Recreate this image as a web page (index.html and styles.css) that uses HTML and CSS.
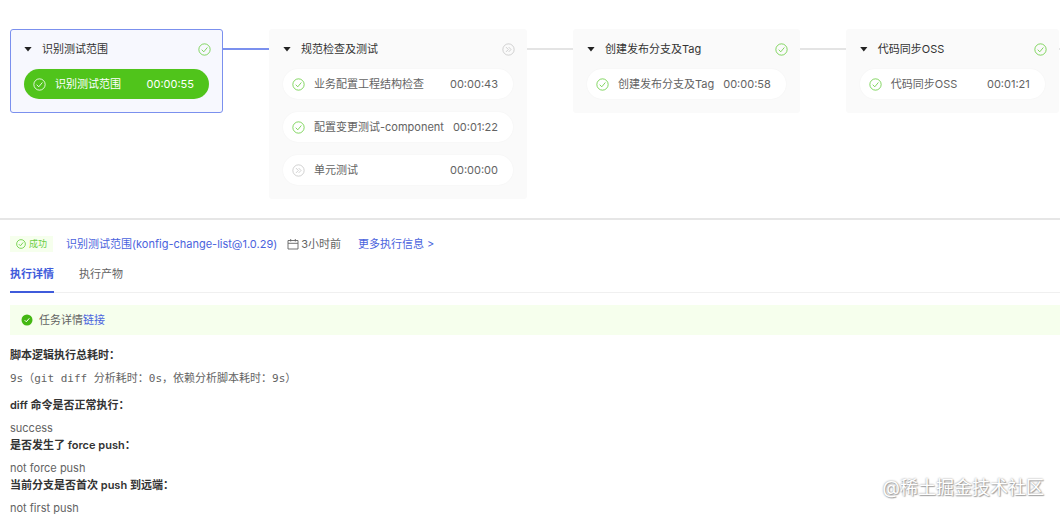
FILE: index.html
```html
<!DOCTYPE html>
<html lang="zh-CN">
<head>
<meta charset="UTF-8">
<meta name="viewport" content="width=device-width, initial-scale=1.0">
<title>识别测试范围</title>
<link rel="stylesheet" href="styles.css">
</head>
<body>

<!-- Shared icons -->
<svg class="sprite" aria-hidden="true">
    <symbol id="icon-check" viewBox="0 0 14 14">
        <circle cx="7" cy="7" r="6.1"/>
        <path d="M4 7.2l2.2 2.3 3.9-4.7"/>
    </symbol>
    <symbol id="icon-skip" viewBox="0 0 14 14">
        <circle cx="7" cy="7" r="6.1"/>
        <path d="M4.3 4.4L6.8 7 4.3 9.6M7.2 4.4L9.7 7 7.2 9.6"/>
    </symbol>
    <symbol id="icon-calendar" viewBox="0 0 12 12">
        <path d="M1 2.5h10v8.500H1zM1 5.300h10M3.700 1v2.500M8.300 1v2.500"/>
    </symbol>
</svg>

<div class="pipeline">
    <section class="stage stage-active">
        <div class="stage-header">
            <button class="stage-toggle"><span class="caret"></span>识别测试范围</button>
            <svg class="icon icon-success"><use href="#icon-check"/></svg>
        </div>
        <button class="job job-active">
            <svg class="icon"><use href="#icon-check"/></svg>
            <span class="job-name">识别测试范围</span>
            <span class="job-time">00:00:55</span>
        </button>
    </section>
    <span class="connector connector-active"></span>
    <section class="stage">
        <div class="stage-header">
            <button class="stage-toggle"><span class="caret"></span>规范检查及测试</button>
            <svg class="icon icon-skipped"><use href="#icon-skip"/></svg>
        </div>
        <button class="job">
            <svg class="icon icon-success"><use href="#icon-check"/></svg>
            <span class="job-name">业务配置工程结构检查</span>
            <span class="job-time">00:00:43</span>
        </button>
        <button class="job">
            <svg class="icon icon-success"><use href="#icon-check"/></svg>
            <span class="job-name">配置变更测试-component</span>
            <span class="job-time">00:01:22</span>
        </button>
        <button class="job">
            <svg class="icon icon-skipped"><use href="#icon-skip"/></svg>
            <span class="job-name">单元测试</span>
            <span class="job-time">00:00:00</span>
        </button>
    </section>
    <span class="connector"></span>
    <section class="stage">
        <div class="stage-header">
            <button class="stage-toggle"><span class="caret"></span>创建发布分支及Tag</button>
            <svg class="icon icon-success"><use href="#icon-check"/></svg>
        </div>
        <button class="job">
            <svg class="icon icon-success"><use href="#icon-check"/></svg>
            <span class="job-name">创建发布分支及Tag</span>
            <span class="job-time">00:00:58</span>
        </button>
    </section>
    <span class="connector"></span>
    <section class="stage">
        <div class="stage-header">
            <button class="stage-toggle"><span class="caret"></span>代码同步OSS</button>
            <svg class="icon icon-success"><use href="#icon-check"/></svg>
        </div>
        <button class="job">
            <svg class="icon icon-success"><use href="#icon-check"/></svg>
            <span class="job-name">代码同步OSS</span>
            <span class="job-time">00:01:21</span>
        </button>
    </section>
    <span class="connector"></span>
</div>

<main class="detail">
    <div class="summary">
        <span class="status"><svg class="icon icon-small"><use href="#icon-check"/></svg>成功</span>
        <a class="summary-name" href="#">识别测试范围(konfig-change-list@1.0.29)</a>
        <span class="summary-time"><svg class="icon icon-calendar"><use href="#icon-calendar"/></svg>3小时前</span>
        <a href="#">更多执行信息 &gt;</a>
    </div>

    <div class="tabs" role="tablist">
        <button class="tab tab-active" role="tab" aria-selected="true">执行详情</button>
        <button class="tab" role="tab" aria-selected="false">执行产物</button>
    </div>

    <div class="notice">
        <svg class="notice-icon" viewBox="0 0 12 12">
            <circle cx="6" cy="6" r="5.500"/>
            <path d="M3.700 6.200l1.600 1.600 3-3.500"/>
        </svg>
        <span>任务详情<a href="#">链接</a></span>
    </div>

    <div class="log">
        <h4>脚本逻辑执行总耗时：</h4>
        <pre>9s（git diff 分析耗时：0s，依赖分析脚本耗时：9s）</pre>
        <h4>diff 命令是否正常执行：</h4>
        <p>success</p>
        <h4>是否发生了 force push：</h4>
        <p>not force push</p>
        <h4>当前分支是否首次 push 到远端：</h4>
        <p>not first push</p>
    </div>
</main>

<div class="watermark">@稀土掘金技术社区</div>

</body>
</html>
```

FILE: styles.css
```css
* {
    box-sizing: border-box;
}
body {
    margin: 0;
    position: relative;
    min-height: 100vh;
    overflow-x: hidden;
    background-color: #fff;
    color: #636363;
    font-family: Inter, "Noto Sans CJK SC", sans-serif;
    font-size: 11px;
    line-height: 20px;
}
button {
    padding: 0;
    border: none;
    background: none;
    color: inherit;
    font: inherit;
    cursor: pointer;
}
a {
    color: #4a63dd;
    text-decoration: none;
}
.sprite {
    display: none;
}
.icon {
    flex: none;
    width: 13px;
    height: 13px;
    fill: none;
    stroke: currentColor;
    stroke-width: 0.9;
}
.icon-success {
    color: #6bce43;
}
.icon-skipped {
    color: #c8c8c8;
}
.icon-small {
    width: 10px;
    height: 10px;
    stroke-width: 1.2;
}
.icon-calendar {
    width: 12px;
    height: 12px;
}

/* Pipeline */
.pipeline {
    display: flex;
    align-items: flex-start;
    padding: 29px 0 19px 10px;
    overflow: hidden;
    border-bottom: 2px solid #e6e6e6;
}
.stage {
    flex: none;
    display: flex;
    flex-direction: column;
    min-width: 213px;
    padding: 9px 11px 13px 13px;
    border: 1px solid #fafafa;
    border-radius: 3px;
    background-color: #fafafa;
}
.stage-active {
    border-color: #7b90ee;
    background-color: #f7f8fe;
}
.stage-header {
    display: flex;
    justify-content: space-between;
    align-items: center;
    margin-bottom: 10px;
    color: #333;
}
.stage-toggle {
    display: flex;
    align-items: center;
    gap: 10px;
}
.caret {
    width: 8px;
    height: 5px;
    background-color: #222;
    clip-path: polygon(0 0, 100% 0, 50% 100%);
}
.job {
    display: flex;
    align-items: center;
    gap: 9px;
    height: 30px;
    padding: 0 15px 0 9px;
    margin-right: 2px;
    border-radius: 15px;
    background-color: #fff;
    box-shadow: 0 0 2px rgba(0, 0, 0, 0.04);
    white-space: nowrap;
}
.job + .job {
    margin-top: 13px;
}
.job-active {
    background-color: #50c41b;
    color: #fff;
}
.job-time {
    margin-left: auto;
}
.connector {
    flex: none;
    width: 46px;
    height: 2px;
    margin-top: 19px;
    background-color: #e4e4e4;
}
.connector-active {
    background-color: #7b90ee;
}

/* Job detail */
.detail {
    padding: 14px 0 0 10px;
}
.summary {
    display: flex;
    align-items: center;
}
.status {
    display: flex;
    align-items: center;
    gap: 3px;
    height: 16px;
    padding: 0 6px;
    margin-right: 13px;
    background-color: #f6ffed;
    color: #6bce43;
    font-size: 9px;
}
.summary-name {
    margin-right: 10px;
}
.summary-time {
    display: flex;
    align-items: center;
    gap: 2px;
    margin-right: 17px;
}
.tabs {
    display: flex;
    gap: 25px;
    margin-top: 10px;
    border-bottom: 1px solid #f0f0f0;
}
.tab {
    padding-bottom: 7px;
    margin-bottom: -1px;
    border-bottom: 2px solid transparent;
}
.tab-active {
    border-color: #3f5bdb;
    color: #3f5bdb;
    font-weight: 600;
}
.notice {
    display: flex;
    align-items: center;
    gap: 6px;
    padding: 5px 11px;
    margin-top: 12px;
    background-color: #f6ffed;
}
.notice-icon {
    width: 12px;
    height: 12px;
    fill: #44b813;
}
.notice-icon path {
    fill: none;
    stroke: #fff;
}
.log {
    padding-top: 12px;
    line-height: 17px;
}
.log h4,
.log p,
.log pre {
    margin: 0;
    font-size: 11px;
}
.log h4 {
    padding-bottom: 6px;
    color: #333;
    font-weight: 600;
}
.log pre {
    padding-bottom: 10px;
    font-family: "DejaVu Sans Mono", "Noto Sans CJK SC", monospace;
}
.watermark {
    position: absolute;
    right: 16px;
    bottom: 16px;
    color: #fff;
    font-size: 18px;
    line-height: 26px;
    text-shadow: 0 0 2px #888, 1px 1px 1px #aaa;
    pointer-events: none;
}
```
